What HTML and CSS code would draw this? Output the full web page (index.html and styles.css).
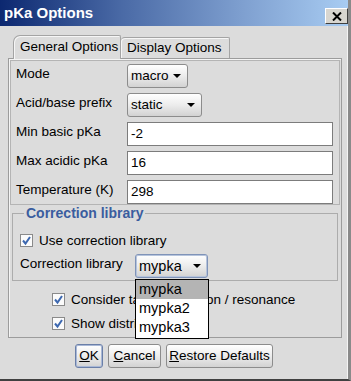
FILE: index.html
```html
<!DOCTYPE html>
<html lang="en">
<head>
    <meta charset="UTF-8">
    <title>pKa Options</title>
    <link rel="stylesheet" href="styles.css">
</head>
<body>
    <div class="window">
        <div class="titlebar">
            <span class="title">pKa Options</span>
            <span class="close">
                <svg width="10" height="9" viewBox="0 0 10 9"><path d="M1 0.5 L9 8.5 M9 0.5 L1 8.5" stroke="#000" stroke-width="2"/></svg>
            </span>
        </div>
        <div class="client">
            <div class="tabs">
                <div class="tab active">General Options</div>
                <div class="tab">Display Options</div>
            </div>
            <div class="panel">
                <div class="group">
                    <div class="row"><label>Mode</label><div class="combo mode">macro<span class="arrow"></span></div></div>
                    <div class="row"><label>Acid/base prefix</label><div class="combo prefix">static<span class="arrow"></span></div></div>
                    <div class="row"><label>Min basic pKa</label><div class="field">-2</div></div>
                    <div class="row"><label>Max acidic pKa</label><div class="field">16</div></div>
                    <div class="row"><label>Temperature (K)</label><div class="field">298</div></div>
                </div>
                <fieldset class="corr">
                    <legend>Correction library</legend>
                    <div class="check-row">
                        <span class="check"><svg width="11" height="11" viewBox="0 0 11 11"><path d="M2 5.5 L4.5 8.5 L9 2" fill="none" stroke="#3d68b0" stroke-width="2"/></svg></span>
                        Use correction library
                    </div>
                    <div class="row lib-row">
                        <label>Correction library</label>
                        <div class="combo lib focus">mypka<span class="arrow"></span></div>
                        <ul class="popup">
                            <li class="sel">mypka</li>
                            <li>mypka2</li>
                            <li>mypka3</li>
                        </ul>
                    </div>
                </fieldset>
                <div class="options">
                    <div class="check-row">
                        <span class="check"><svg width="11" height="11" viewBox="0 0 11 11"><path d="M2 5.5 L4.5 8.5 L9 2" fill="none" stroke="#3d68b0" stroke-width="2"/></svg></span>
                        Consider tautomerization / resonance
                    </div>
                    <div class="check-row">
                        <span class="check"><svg width="11" height="11" viewBox="0 0 11 11"><path d="M2 5.5 L4.5 8.5 L9 2" fill="none" stroke="#3d68b0" stroke-width="2"/></svg></span>
                        Show distribution chart
                    </div>
                </div>
            </div>
            <div class="buttons">
                <span class="btn ok default"><u>O</u>K</span>
                <span class="btn cancel"><u>C</u>ancel</span>
                <span class="btn restore"><u>R</u>estore Defaults</span>
            </div>
        </div>
    </div>
</body>
</html>
```

FILE: styles.css
```css
* {
    margin: 0;
    padding: 0;
    box-sizing: border-box;
}
body {
    font-family: "Liberation Sans", Arial, sans-serif;
    font-size: 13.5px;
    color: #000;
    background: #dcdcdc;
}
ul, li {
    list-style: none;
}
.window {
    width: 351px;
    height: 381px;
    background-color: #dcdcdc;
    border-right: 3px solid #8a8a8a;
    border-bottom: 2px solid #404040;
    box-shadow: inset -1px 0 0 #f4f4f4;
}

/* title bar */
.titlebar {
    height: 26px;
    display: flex;
    align-items: flex-start;
    justify-content: space-between;
    background: linear-gradient(to right, #0c2870, #4a6aa6 35%, #7fa0d0 70%, #a8ccf2);
}
.title {
    color: #fff;
    font-weight: bold;
    font-size: 15px;
    line-height: 26px;
    padding-left: 4px;
}
.close {
    width: 23px;
    height: 16px;
    margin-top: 8px;
    display: flex;
    align-items: center;
    justify-content: center;
    background-color: #d8d6d0;
    border: 1px solid;
    border-color: #fff #404040 #404040 #fff;
}

/* tabs */
.client {
    padding: 9px 6px 0 8px;
}
.tabs {
    display: flex;
    align-items: flex-end;
    height: 23px;
    padding-left: 5px;
    position: relative;
    z-index: 1;
}
.tab {
    height: 21px;
    line-height: 20px;
    border: 1px solid #a4a4a4;
    border-bottom: none;
    border-top-left-radius: 7px;
    border-top-right-radius: 2px;
    box-shadow: inset 1px 1px 0 #f6f6f6;
    background-color: #dcdcdc;
    white-space: nowrap;
}
.tab.active {
    width: 108px;
    height: 24px;
    margin-bottom: -1px;
    padding-left: 6px;
    line-height: 22px;
}
.tab:not(.active) {
    width: 109px;
    padding-left: 6px;
    border-left: none;
    border-top-left-radius: 4px;
}
.panel {
    height: 280px;
    border: 1px solid #9c9c9c;
    box-shadow: inset 1px 1px 0 #f4f4f4;
    padding: 1px;
}

/* field rows */
.group {
    border: 1px solid #b4b4b4;
    padding: 3px 5px 0 5px;
    display: flex;
    flex-direction: column;
    gap: 5px;
}
.row {
    display: flex;
    align-items: center;
    height: 24px;
}
.row label {
    width: 111px;
    padding-bottom: 5px;
    white-space: nowrap;
}
.field {
    width: 206px;
    height: 24px;
    line-height: 22px;
    padding-left: 3px;
    background-color: #fff;
    border: 1px solid #7c7c7c;
}
.combo {
    position: relative;
    height: 24px;
    line-height: 22px;
    padding-left: 3px;
    border: 1px solid #8c8c8c;
    border-radius: 3px;
    background: linear-gradient(#ffffff, #ececec 50%, #d2d2d2);
}
.combo.mode {
    width: 61px;
}
.combo.prefix {
    width: 75px;
}
.combo.lib {
    width: 73px;
    font-size: 14.5px;
}
.combo.focus {
    border-color: #7f93b8;
    box-shadow: inset 0 0 0 1px #b6c4dc;
}
.arrow {
    position: absolute;
    right: 6px;
    top: 9px;
    border-left: 4px solid transparent;
    border-right: 4px solid transparent;
    border-top: 4px solid #000;
}

/* correction library */
.corr {
    margin: 0 2px 0 2px;
    border: 1px solid #acacac;
    padding: 9px 6px 2px 7px;
}
.corr legend {
    margin-left: 4px;
    padding: 0 2px;
    line-height: 16px;
    font-size: 14px;
    font-weight: bold;
    color: #3a5d9f;
}
.check-row {
    display: flex;
    align-items: center;
    gap: 6px;
    height: 20px;
    white-space: nowrap;
}
.check {
    width: 13px;
    height: 13px;
    display: flex;
    align-items: center;
    justify-content: center;
    background-color: #fbfbfb;
    border: 1px solid #8a8a8a;
}
.corr .check-row {
    margin-bottom: 4px;
}
.lib-row {
    position: relative;
}
.lib-row label {
    width: 115px;
}
.popup {
    position: absolute;
    left: 115px;
    top: 25px;
    width: 74px;
    height: 60px;
    background-color: #fff;
    border: 1px solid #000;
    font-size: 14.5px;
    z-index: 2;
}
.popup li {
    height: 19px;
    line-height: 19px;
    padding-left: 3px;
}
.popup li.sel {
    background-color: #b4b4b4;
}
.options {
    margin-top: 8px;
    padding-left: 42px;
    display: flex;
    flex-direction: column;
    gap: 4px;
}

/* buttons */
.buttons {
    display: flex;
    justify-content: center;
    gap: 5px;
    margin-top: 6px;
    padding-right: 2px;
}
.btn {
    height: 24px;
    line-height: 22px;
    text-align: center;
    white-space: nowrap;
    border: 1px solid #8c8c8c;
    border-radius: 3px;
    background: linear-gradient(#ffffff, #ececec 50%, #d2d2d2);
}
.btn.default {
    border-color: #6a7fa8;
    box-shadow: inset 0 0 0 1px #a9b8d6;
}
.btn.ok {
    width: 28px;
}
.btn.cancel {
    width: 53px;
}
.btn.restore {
    width: 107px;
}
```
